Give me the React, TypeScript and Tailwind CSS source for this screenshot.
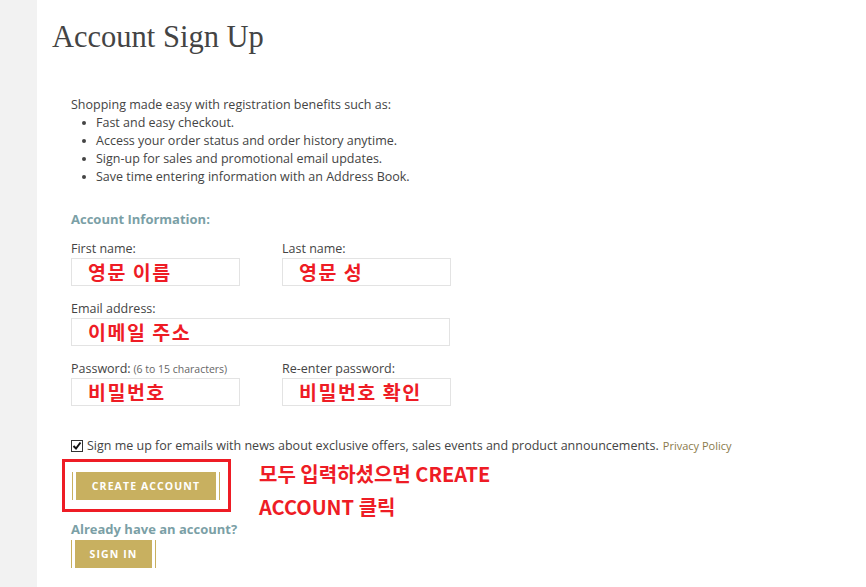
import React from "react";

const body = { fontFamily: '"Open Sans", "Noto Sans CJK KR", sans-serif' };
const kr = { fontFamily: '"Noto Sans CJK KR", sans-serif' };

function Field({ label, hint, value, wide }: { label: string; hint?: string; value: string; wide?: boolean }) {
  return (
    <div className="flex flex-col">
      <div className="h-[18px] text-[12.5px] leading-[18px] text-[#444]">
        {label}
        {hint && <span className="text-[10.5px] text-[#666]"> {hint}</span>}
      </div>
      <div
        className={`h-[28px] border border-[#e3e3e3] bg-white ${wide ? "w-[379px]" : "w-[169px]"} flex items-center pl-[16px]`}
      >
        <span style={kr} className="text-[19.5px] font-bold leading-none text-[#ee1c25] tracking-[1.5px]">
          {value}
        </span>
      </div>
    </div>
  );
}

function GoldButton({ text, w }: { text: string; w: string }) {
  return (
    <div className="flex items-stretch h-[28px]">
      <div className="w-[1px] bg-[#c8b060]" />
      <div className={`ml-[3px] ${w} bg-[#c8b060] flex items-center justify-center`}>
        <span className="text-white text-[10.5px] font-bold tracking-[1.1px]">{text}</span>
      </div>
      <div className="ml-[3px] w-[1px] bg-[#c8b060]" />
    </div>
  );
}

export default function App() {
  return (
    <div className="flex w-[866px] h-[587px] bg-white overflow-hidden" style={body}>
      <div className="w-[37px] bg-[#f2f2f2] shrink-0" />
      <div className="flex flex-col">
        <h1
          className="ml-[15px] mt-[18px] text-[30.5px] leading-[38px] text-[#444]"
          style={{ fontFamily: '"Liberation Serif", serif' }}
        >
          Account Sign Up
        </h1>
        <div className="ml-[34px] mt-[40px] text-[12.5px] leading-[18px] text-[#444]">
          <div>Shopping made easy with registration benefits such as:</div>
          <ul className="ml-[9px]">
            {[
              "Fast and easy checkout.",
              "Access your order status and order history anytime.",
              "Sign-up for sales and promotional email updates.",
              "Save time entering information with an Address Book.",
            ].map((t) => (
              <li key={t} className="flex h-[18px] items-center">
                <span className="w-[16px] pl-[2px] flex items-center">
                  <span className="block w-[4px] h-[4px] rounded-full bg-[#444]" />
                </span>
                <span>{t}</span>
              </li>
            ))}
          </ul>
          <div className="mt-[24px] text-[13px] font-bold text-[#7b9fa6]">Account Information:</div>
          <div className="mt-[12px] flex gap-[42px]">
            <Field label="First name:" value="영문 이름" />
            <Field label="Last name:" value="영문 성" />
          </div>
          <div className="mt-[14px]">
            <Field label="Email address:" value="이메일 주소" wide />
          </div>
          <div className="mt-[14px] flex gap-[42px]">
            <Field label="Password:" hint="(6 to 15 characters)" value="비밀번호" />
            <Field label="Re-enter password:" value="비밀번호 확인" />
          </div>
          <div className="mt-[31px] flex items-center text-[12.5px] text-[#444]">
            <span className="w-[12px] h-[12px] border border-[#333] flex items-center justify-center mr-[4px] bg-white">
              <svg width="10" height="10" viewBox="0 0 10 10">
                <path d="M1.5 5 L4 7.5 L8.5 1.5" stroke="#111" strokeWidth="2" fill="none" />
              </svg>
            </span>
            Sign me up for emails with news about exclusive offers, sales events and product announcements.
            <span className="ml-[4px] text-[11px] text-[#8a7a4a]">Privacy Policy</span>
          </div>
          <div className="mt-[4px] flex h-[53px]">
            <div className="-ml-[9px] w-[169px] h-[53px] border-[3px] border-[#ee1c25] flex items-center pl-[7px]">
              <GoldButton text="CREATE ACCOUNT" w="w-[140px]" />
            </div>
            <div style={kr} className="ml-[28px] -mt-[2px] text-[20px] font-bold leading-[33px] text-[#ee1c25]">
              <div>모두 입력하셨으면 CREATE</div>
              <div>ACCOUNT 클릭</div>
            </div>
          </div>
          <div className="mt-[8px] text-[13px] font-bold text-[#7b9fa6] leading-[18px]">Already have an account?</div>
          <div className="mt-[2px]">
            <GoldButton text="SIGN IN" w="w-[77px]" />
          </div>
        </div>
      </div>
    </div>
  );
}
